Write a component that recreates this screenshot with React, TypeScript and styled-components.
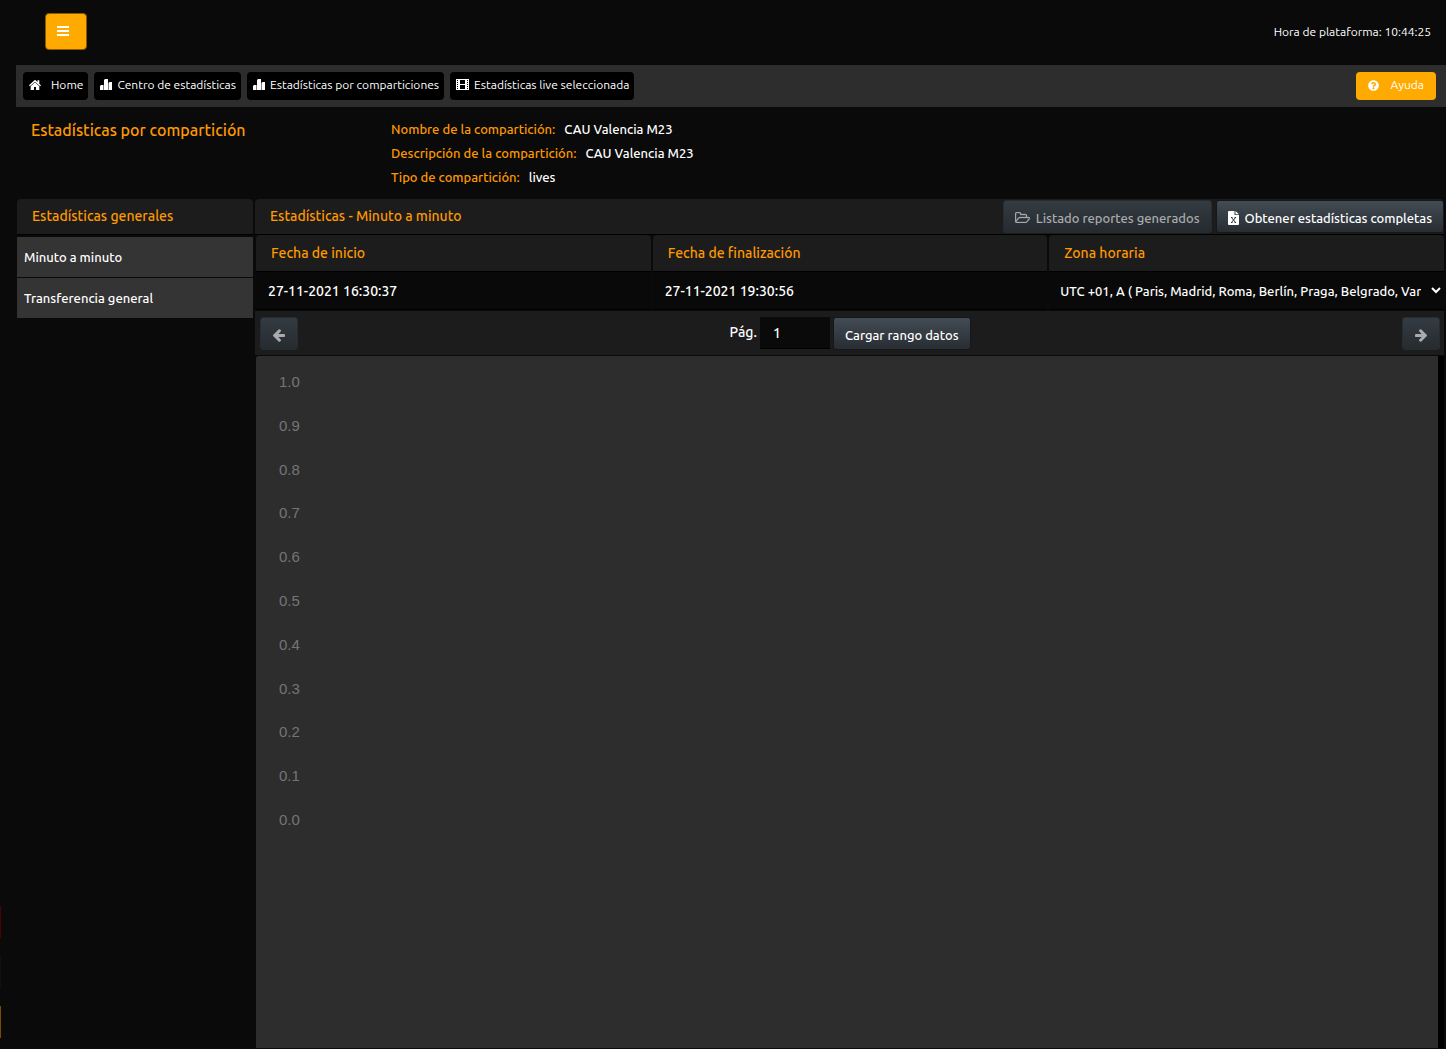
import React from "react";
import styled, { createGlobalStyle } from "styled-components";
import { FaQuestionCircle } from "react-icons/fa";

const GlobalStyle = createGlobalStyle`
  *, *::before, *::after { box-sizing: border-box; }
  body {
    margin: 0;
    background: #0a0a0a;
    color: #fff;
    font: 500 14px/20px Ubuntu, "Noto Sans", "Open Sans", sans-serif;
  }
  button, input, select { font: inherit; color: inherit; }
  a { color: inherit; text-decoration: none; }
`;

const Page = styled.div`
  position: relative;
  display: flex;
  flex-direction: column;
  min-height: 100vh;
  padding-left: 16px;
`;

const TopBar = styled.header`
  display: flex;
  align-items: center;
  justify-content: space-between;
  height: 65px;
  padding: 0 15px 2px 29px;
  font-size: 12px;
  font-weight: 400;
`;

const MenuButton = styled.button`
  display: grid;
  place-items: center;
  width: 42px;
  height: 37px;
  padding: 0 6px 1px 0;
  border: 1px solid #8a5a00;
  border-radius: 4px;
  background: #ffaa00;
`;

const Nav = styled.nav`
  display: flex;
  align-items: center;
  gap: 6px;
  height: 42px;
  padding: 0 10px 0 7px;
  background: #2d2d2d;
`;

const NavLink = styled.a<{ $gap?: number }>`
  display: flex;
  align-items: center;
  gap: ${(p) => p.$gap ?? 5}px;
  height: 28px;
  padding: 0 5px 2px 6px;
  border-radius: 4px;
  background: #000;
  font-size: 12px;
  font-weight: 400;
  white-space: nowrap;
`;

const HelpButton = styled.button`
  display: flex;
  align-items: center;
  gap: 11px;
  height: 28px;
  margin-left: auto;
  padding: 0 12px 2px;
  border: 0;
  border-radius: 4px;
  background: #ffaa00;
  font-size: 12px;
  font-weight: 400;
`;

const Summary = styled.section`
  display: grid;
  grid-template-columns: 360px 1fr;
  min-height: 92px;
  padding: 10px 15px;
`;

const Title = styled.h1`
  margin: 0;
  padding-top: 3px;
  color: #ff9900;
  font-size: 16px;
  font-weight: 500;
`;

const Details = styled.dl`
  display: flex;
  flex-direction: column;
  margin: 0;
  font-size: 13px;
  line-height: 24px;
`;

const Detail = styled.div`
  display: flex;
  gap: 9px;
  dt { color: #ff9900; }
  dd { margin: 0; }
`;

const Workspace = styled.main`
  display: grid;
  grid-template-columns: 236px minmax(0, 1fr);
  gap: 2px;
  flex: 1;
  padding: 0 2px 1px 1px;
`;

const Column = styled.section`
  display: flex;
  flex-direction: column;
`;

const PanelHeader = styled.div`
  display: flex;
  align-items: center;
  gap: 4px;
  height: 36px;
  padding-left: 15px;
  border-bottom: 1px solid #000;
  border-radius: 4px 4px 0 0;
  background: #1c1c1c;
`;

const PanelTitle = styled.h2`
  flex: 1;
  margin: 0;
  padding-bottom: 2px;
  color: #ff9900;
  font-size: 14px;
  font-weight: 500;
`;

const SideList = styled.ul`
  display: grid;
  gap: 1px;
  margin: 2px 0 0;
  padding: 0;
  list-style: none;
`;

const SideLink = styled.a`
  display: block;
  padding: 10px 7px;
  background: #343434;
  font-size: 13px;
`;

const SlateButton = styled.button<{ $square?: boolean }>`
  display: flex;
  align-items: center;
  justify-content: center;
  gap: 6px;
  height: 33px;
  width: ${(p) => (p.$square ? "38px" : "auto")};
  padding: ${(p) => (p.$square ? "4px 0 0" : "2px 11px 0")};
  border: 1px solid #14181a;
  border-radius: 3px;
  background: linear-gradient(#434b54, #272d32);
  font-size: 13px;
  white-space: nowrap;
  &:disabled {
    border-color: #252d31;
    background: linear-gradient(#343b42, #252b2f);
    color: #a9abac;
  }
`;

const Filters = styled.div`
  display: grid;
  grid-template-columns: repeat(3, minmax(0, 1fr));
  gap: 2px;
  padding-left: 1px;
`;

const Field = styled.div`
  display: flex;
  flex-direction: column;
  border-bottom: 1px solid #000;
  label {
    padding: 8px 15px;
    border-bottom: 1px solid #000;
    border-radius: 4px 4px 0 0;
    background: #1c1c1c;
    color: #ff9900;
  }
  input, select {
    width: 100%;
    height: 37px;
    border: 0;
    background: #090909;
  }
  input { padding: 0 12px; }
  select { padding: 0 7px; font-size: 13px; }
`;

const Pager = styled.form`
  display: flex;
  align-items: flex-start;
  justify-content: space-between;
  height: 45px;
  margin-top: 1px;
  padding: 6px 4px 0 5px;
  border-bottom: 1px solid #0a0a0a;
  background: #1c1c1c;
`;

const PageRange = styled.div`
  display: flex;
  align-items: flex-start;
  gap: 3px;
  label { line-height: 31px; }
  input {
    width: 70px;
    height: 32px;
    padding: 0 13px;
    border: 0;
    border-bottom: 1px solid #000;
    background: #0a0a0a;
  }
`;

const ChartArea = styled.div`
  flex: 1;
  margin-left: 1px;
  border-right: 6px solid #000;
  border-radius: 3px 0 0 0;
  background: #2d2d2d;
`;

const Axis = styled.ol`
  display: grid;
  grid-template-rows: repeat(11, 1fr);
  align-items: center;
  height: 482px;
  margin: 4px 0 0;
  padding: 0 0 0 23px;
  list-style: none;
  color: #757575;
  font: 400 15px/20px "Liberation Sans", Arial, sans-serif;
`;

const Tabs = styled.div`
  position: absolute;
  left: 0;
  bottom: 11px;
  display: grid;
  gap: 18px;
`;

const Tab = styled.i<{ $color: string }>`
  width: 1px;
  height: 32px;
  background: ${(p) => p.$color};
`;

const MenuIcon = () => (
  <svg width="12" height="10" viewBox="0 0 12 10" fill="#fff" aria-hidden="true">
    <path d="M0 0h12v2H0zM0 4h12v2H0zM0 8h12v2H0z" />
  </svg>
);

const HomeIcon = () => (
  <svg width="12" height="12" viewBox="0 0 12 12" fill="#fff" aria-hidden="true">
    <path d="M6 .8 0 6.300l.9 1L6 2.700l5.100 4.600.9-1-1.700-1.600V1.300H8.500v1.800z" />
    <path d="M6 3.200 1.700 7.200V11H5V8h2v3h3.300V7.200z" />
  </svg>
);

const StatsIcon = () => (
  <svg width="12" height="12" viewBox="0 0 12 12" fill="#fff" aria-hidden="true">
    <path d="M0 7 1 6h2.500v5H0zM4 1l1-1h3v11H4zM8.500 4l1-1H12v8H8.500z" />
  </svg>
);

const FilmIcon = () => (
  <svg width="13" height="12" viewBox="0 0 13 12" aria-hidden="true">
    <path fill="#fff" fillRule="evenodd" d="M0 0h13v11H0zM4 1v4h5V1zM4 6v4h5V6zM1 1v1h1V1zM1 3v1h1V3zM1 5v1h1V5zM1 7v1h1V7zM1 9v1h1V9zM11 1v1h1V1zM11 3v1h1V3zM11 5v1h1V5zM11 7v1h1V7zM11 9v1h1V9z" />
  </svg>
);

const FolderIcon = () => (
  <svg width="15" height="11" viewBox="0 0 1909 1408" fill="currentColor" stroke="currentColor" strokeWidth="40" aria-hidden="true">
    <path d="M1781 803q0-35-53-35H640q-40 0-85.500 21.500T484 840l-294 363q-18 24-18 40 0 35 53 35h1088q40 0 86-22t71-53l294-363q18-22 18-37zM640 640h768V480q0-40-28-68t-68-28H736q-40 0-68-28t-28-68v-64q0-40-28-68t-68-28H224q-40 0-68 28t-28 68v853l256-315q44-53 116-87.500T640 640zm1269 163q0 62-46 120l-295 363q-43 53-116 87.500t-140 34.500H224q-92 0-158-66T0 1184V224q0-92 66-158T224 0h320q92 0 158 66t66 158v32h544q92 0 158 66t66 158v160h192q54 0 99 24.500t67 70.500q15 32 15 68z" />
  </svg>
);

const ArrowIcon = ({ right = false }: { right?: boolean }) => (
  <svg width="12" height="13" viewBox="0 0 1472 1600" fill="currentColor" aria-hidden="true">
    <path
      transform={right ? "matrix(-1 0 0 1 1472 0)" : undefined}
      d="M1472 736v128q0 53-32.500 90.500T1355 992H651l293 294q38 36 38 90t-38 90l-75 76q-37 37-90 37-52 0-91-37L37 891Q0 854 0 800q0-53 37-91L688 59q38-38 91-38 52 0 90 38l75 74q38 38 38 91t-38 91L651 608h704q52 0 84.500 37.500T1472 736z"
    />
  </svg>
);

const SheetIcon = () => (
  <svg width="11" height="14" viewBox="0 0 11 14" aria-hidden="true">
    <path fill="#fff" d="M0 1q0-1 1-1h5.500v4H11v9q0 1-1 1H1q-1 0-1-1zM7.500 0 11 3.200H7.500z" />
    <path stroke="#30373d" d="m3.500 6.500 4 5m0-5-4 5M3 6.500h1.500m2 0H8M3 11.500h1.500m2 0H8" />
  </svg>
);

const details = [
  ["Nombre de la compartición:", "CAU Valencia M23"],
  ["Descripción de la compartición:", "CAU Valencia M23"],
  ["Tipo de compartición:", "lives"],
];

const ticks = ["1.0", "0.9", "0.8", "0.7", "0.6", "0.5", "0.4", "0.3", "0.2", "0.1", "0.0"];

export default function App() {
  return (
    <Page>
      <GlobalStyle />
      <TopBar>
        <MenuButton type="button" aria-label="Menú"><MenuIcon /></MenuButton>
        <span>Hora de plataforma: 10:44:25</span>
      </TopBar>
      <Nav>
        <NavLink href="#home" $gap={10}><HomeIcon />Home</NavLink>
        <NavLink href="#centro"><StatsIcon />Centro de estadísticas</NavLink>
        <NavLink href="#comparticiones"><StatsIcon />Estadísticas por comparticiones</NavLink>
        <NavLink href="#live"><FilmIcon />Estadísticas live seleccionada</NavLink>
        <HelpButton type="button"><FaQuestionCircle size={11} />Ayuda</HelpButton>
      </Nav>
      <Summary>
        <Title>Estadísticas por compartición</Title>
        <Details>
          {details.map(([term, value]) => (
            <Detail key={term}><dt>{term}</dt><dd>{value}</dd></Detail>
          ))}
        </Details>
      </Summary>
      <Workspace>
        <Column>
          <PanelHeader><PanelTitle>Estadísticas generales</PanelTitle></PanelHeader>
          <SideList>
            <li><SideLink href="#minuto">Minuto a minuto</SideLink></li>
            <li><SideLink href="#transferencia">Transferencia general</SideLink></li>
          </SideList>
        </Column>
        <Column>
          <PanelHeader>
            <PanelTitle>Estadísticas - Minuto a minuto</PanelTitle>
            <SlateButton type="button" disabled><FolderIcon />Listado reportes generados</SlateButton>
            <SlateButton type="button"><SheetIcon />Obtener estadísticas completas</SlateButton>
          </PanelHeader>
          <Filters>
            <Field>
              <label htmlFor="inicio">Fecha de inicio</label>
              <input id="inicio" defaultValue="27-11-2021 16:30:37" />
            </Field>
            <Field>
              <label htmlFor="fin">Fecha de finalización</label>
              <input id="fin" defaultValue="27-11-2021 19:30:56" />
            </Field>
            <Field>
              <label htmlFor="zona">Zona horaria</label>
              <select id="zona">
                <option>UTC +01, A ( Paris, Madrid, Roma, Berlín, Praga, Belgrado, Varsovia )</option>
              </select>
            </Field>
          </Filters>
          <Pager onSubmit={(e) => e.preventDefault()}>
            <SlateButton type="button" $square disabled aria-label="Anterior"><ArrowIcon /></SlateButton>
            <PageRange>
              <label htmlFor="pagina">Pág.</label>
              <input id="pagina" defaultValue="1" />
              <SlateButton type="submit">Cargar rango datos</SlateButton>
            </PageRange>
            <SlateButton type="button" $square disabled aria-label="Siguiente"><ArrowIcon right /></SlateButton>
          </Pager>
          <ChartArea>
            <Axis>{ticks.map((t) => <li key={t}>{t}</li>)}</Axis>
          </ChartArea>
        </Column>
      </Workspace>
      <Tabs aria-hidden="true">
        <Tab $color="#500000" />
        <Tab $color="#0d1216" />
        <Tab $color="#7d4b00" />
      </Tabs>
    </Page>
  );
}
